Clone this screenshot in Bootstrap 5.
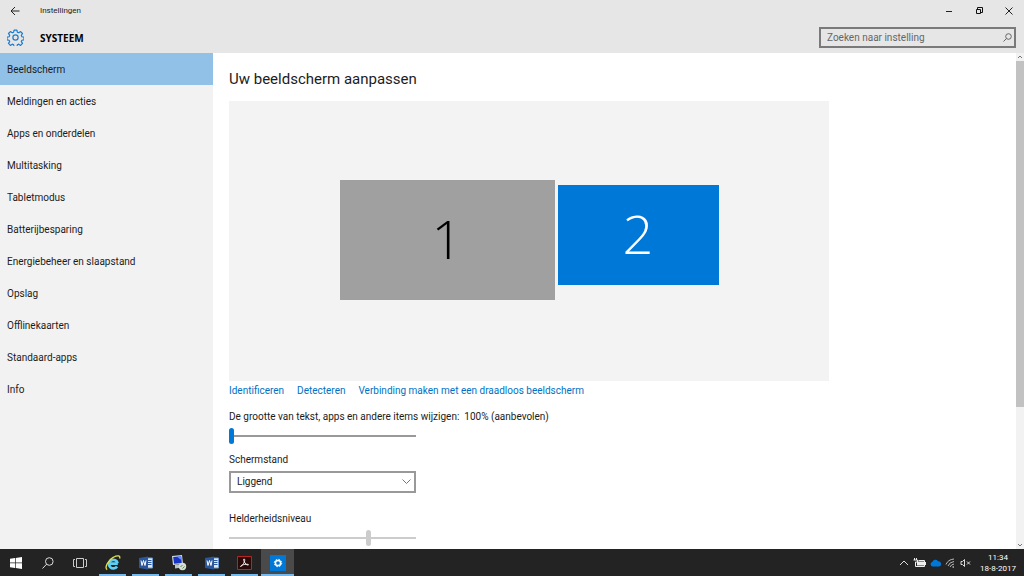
<!DOCTYPE html>
<html lang="nl">
<head>
<meta charset="utf-8">
<meta name="viewport" content="width=device-width, initial-scale=1">
<title>Instellingen</title>
<link rel="stylesheet" href="https://cdn.jsdelivr.net/npm/bootstrap@5.3.0/dist/css/bootstrap.min.css">
<style>
  body { font-family: Roboto, "Open Sans", sans-serif; font-size: 10px; line-height: 16px; color: #1c1c1c; background: #fff; }
  svg { display: block; flex: none; }
  .icon-btn { border: 0; background: none; color: inherit; padding: 0; display: flex; align-items: center; justify-content: center; }
  .app-head { background: #e6e6e6; }
  .title-row { height: 22px; }
  .title-row .icon-btn { width: 30px; height: 22px; }
  .app-title { font-size: 8px; padding-left: 10px; }
  .page-row { height: 31px; padding-right: 8px; padding-left: 7px; }
  .page-title { font-size: 10px; font-family: "Open Sans", sans-serif; font-weight: 700; color: #000; }
  .search-box { width: 197px; height: 21px; border: 2px solid #7a7a7a; padding: 0 2px 0 6px; }
  .search-box input { border: 0; background: none; outline: 0; padding: 0; min-width: 0; color: #222; }
  .search-box input::placeholder { color: #666; opacity: 1; }
  .side { width: 213px; background: #f2f2f2; }
  .side .nav-link { height: 32px; padding: 9px 7px 7px; color: #1c1c1c; border-radius: 0; }
  .side .nav-link.active { background: #91c1e7; }
  .main-pane { padding: 16px 16px 0; min-height: 0; }
  .main-pane h1 { font-size: 15px; line-height: 20px; font-weight: 400; margin: 0 0 12px; }
  .stage { max-width: 600px; height: 280px; background: #f3f3f3; gap: 3px; padding-top: 79px; }
  .screen { font-family: "Open Sans", sans-serif; font-size: 54px; font-weight: 300; border: 0; padding: 0 0 4px; line-height: 60px; }
  .screen-one { width: 215px; height: 120px; background: #a0a0a0; color: #000; }
  .screen-two { width: 161px; height: 100px; background: #0078d7; color: #fff; margin-top: 5px; }
  .actions { gap: 13px; margin: 2px 0 10px; }
  .actions a { color: #0071c5; text-decoration: none; }
  .field { width: 187px; }
  .win-range { appearance: none; display: block; width: 100%; height: 16px; margin: 3px 0 8px; background: linear-gradient(#999, #999) center / 100% 2px no-repeat; }
  .win-range::-webkit-slider-thumb { appearance: none; width: 5px; height: 16px; border-radius: 3px; background: #0078d7; }
  .win-range:disabled { background-image: linear-gradient(#ccc, #ccc); }
  .win-range:disabled::-webkit-slider-thumb { background: #ccc; }
  .win-select { position: relative; margin: 3px 0 18px; }
  .win-select select { appearance: none; display: block; width: 100%; height: 22px; border: 2px solid #999; border-radius: 0; background: #fff; padding: 0 6px; color: #1c1c1c; }
  .win-select svg { position: absolute; right: 5px; top: 8px; pointer-events: none; }
  .scroll-col { width: 8px; background: #f2f2f2; }
  .scroll-thumb { flex: 346 0 0; background: #c2c2c2; }
  .scroll-rest { flex: 134 0 0; }
  .task { height: 27px; background: #232323; color: #fff; }
  .task .icon-btn { width: 32px; height: 27px; }
  .task .running { border-bottom: 2px solid #76b9ed; width: 27px; margin: 0 3px; padding-top: 2px; }
  .task .current { background: #4a4a4a; width: 33px; margin: 0; }
  .tray { gap: 4px; padding-right: 8px; }
  .clock { font-size: 8px; line-height: 11px; margin-left: 4px; }
</style>
</head>
<body class="vh-100 d-flex flex-column overflow-hidden">
<header class="app-head">
  <div class="title-row d-flex align-items-center">
    <button class="icon-btn" aria-label="Terug"><svg width="10" height="10" fill="none" stroke="#222"><path d="M9.500 5H1M5 1 1 5l4 4"/></svg></button>
    <span class="app-title flex-grow-1">Instellingen</span>
    <button class="icon-btn" aria-label="Minimaliseren"><svg width="8" height="8" stroke="#222"><path d="M1 4.500h6"/></svg></button>
    <button class="icon-btn" aria-label="Herstellen"><svg width="8" height="8" fill="none" stroke="#111"><path d="M1.500 2.500h4v4h-4zM2.500 2V.500h5v5H6"/></svg></button>
    <button class="icon-btn" aria-label="Sluiten"><svg width="8" height="8" stroke="#222"><path d="m.500.500 7 7m0-7-7 7"/></svg></button>
  </div>
  <div class="page-row d-flex align-items-center">
    <svg width="17" height="17" viewBox="0 0 24 24" fill="none" stroke="#1c7cd0" stroke-width="1.700"><circle cx="12" cy="12" r="3.700"/><path d="M10 1.500h4l.6 3 2 .9 2.600-1.800 2.700 2.800-1.700 2.600.8 1.900 3 .6v3.800l-3 .6-.8 2 1.700 2.500-2.700 2.800-2.600-1.800-2 .9-.6 3h-4l-.6-3-2-.9-2.600 1.800-2.700-2.800 1.700-2.500-.8-2-3-.6v-3.800l3-.6.8-1.900-1.700-2.600 2.700-2.800 2.600 1.800 2-.9z" stroke-linejoin="round"/></svg>
    <span class="page-title ms-3 flex-grow-1">SYSTEEM</span>
    <div class="search-box d-flex align-items-center">
      <input class="flex-grow-1" type="search" placeholder="Zoeken naar instelling" aria-label="Zoeken naar instelling">
      <svg width="9" height="9" fill="none" stroke="#666"><circle cx="5.500" cy="3.500" r="2.800"/><path d="M3.500 5.500.500 8.500"/></svg>
    </div>
  </div>
</header>
<div class="d-flex flex-grow-1 overflow-hidden">
  <nav class="side nav flex-column flex-nowrap flex-shrink-0">
    <a class="nav-link active" href="#">Beeldscherm</a>
    <a class="nav-link" href="#">Meldingen en acties</a>
    <a class="nav-link" href="#">Apps en onderdelen</a>
    <a class="nav-link" href="#">Multitasking</a>
    <a class="nav-link" href="#">Tabletmodus</a>
    <a class="nav-link" href="#">Batterijbesparing</a>
    <a class="nav-link" href="#">Energiebeheer en slaapstand</a>
    <a class="nav-link" href="#">Opslag</a>
    <a class="nav-link" href="#">Offlinekaarten</a>
    <a class="nav-link" href="#">Standaard-apps</a>
    <a class="nav-link" href="#">Info</a>
  </nav>
  <main class="main-pane flex-grow-1 overflow-hidden">
    <h1>Uw beeldscherm aanpassen</h1>
    <div class="stage d-flex justify-content-center align-items-start">
      <button class="screen screen-one">1</button>
      <button class="screen screen-two">2</button>
    </div>
    <div class="actions d-flex">
      <a href="#">Identificeren</a>
      <a href="#">Detecteren</a>
      <a href="#">Verbinding maken met een draadloos beeldscherm</a>
    </div>
    <label class="d-block" for="scale">De grootte van tekst, apps en andere items wijzigen:&nbsp; 100% (aanbevolen)</label>
    <div class="field">
      <input class="win-range" id="scale" type="range" min="0" max="3" value="0">
      <label class="d-block" for="orient">Schermstand</label>
      <div class="win-select">
        <select id="orient"><option>Liggend</option><option>Staand</option></select>
        <svg width="9" height="6" fill="none" stroke="#777"><path d="m.500.500 4 4 4-4"/></svg>
      </div>
      <label class="d-block" for="bright">Helderheidsniveau</label>
      <input class="win-range" id="bright" type="range" min="0" max="100" value="75" disabled>
    </div>
  </main>
  <div class="scroll-col d-flex flex-column flex-shrink-0" aria-hidden="true">
    <svg width="8" height="8" fill="none" stroke="#777"><path d="m2 5 2-2 2 2"/></svg>
    <div class="scroll-thumb"></div>
    <div class="scroll-rest"></div>
    <svg width="8" height="8" fill="none" stroke="#777"><path d="m2 3 2 2 2-2"/></svg>
  </div>
</div>
<footer class="task d-flex align-items-center flex-shrink-0">
  <button class="icon-btn" aria-label="Start"><svg width="12" height="12" fill="#fff"><path d="M0 1.800 5 1v4.600H0zM5.700.900 12 0v5.600H5.700zM0 6.300h5v4.600l-5-.7zM5.700 6.300H12V12l-6.300-.9z"/></svg></button>
  <button class="icon-btn" aria-label="Zoeken"><svg width="12" height="12" fill="none" stroke="#ddd"><circle cx="7.300" cy="4.500" r="3.800"/><path d="M4.600 7.200.500 11.500"/></svg></button>
  <button class="icon-btn" aria-label="Taakweergave"><svg width="14" height="10" fill="none" stroke="#ccc"><path d="M3.500.500h7v9h-7zM2 1.500H.500v7H2M12 1.500h1.500v7H12"/></svg></button>
  <button class="icon-btn running" aria-label="Internet Explorer"><svg width="16" height="16" viewBox="0 0 16 16" fill="none"><path d="M12.800 8.600H4.500M12.600 8.300A4.300 4.300 0 1 0 12 11.500" stroke="#5fd0f5" stroke-width="2.700"/><path d="M2.200 14.600C-.8 13 3 5 8.500 2.200 12 .300 15.700.200 14.600 3.500" stroke="#e6e04a" stroke-width="1.300"/></svg></button>
  <button class="icon-btn running" aria-label="Word"><svg width="14" height="14"><path d="M8 2h5.500v10H8z" fill="#dce8f8" stroke="#6d99d6"/><path d="M9 4.500h3.500m-3.500 2h3.500m-3.500 2h3.500" stroke="#2b579a"/><path d="M0 2 9 .5v13L0 12z" fill="#2b579a"/><path d="m2 4.500 1 5 1.500-5 1.500 5 1-5" fill="none" stroke="#fff"/></svg></button>
  <button class="icon-btn running" aria-label="Extern bureaublad"><svg width="16" height="16"><path d="m1 1 10-1 1 9-10 1z" fill="#d8dde6"/><path d="m2.200 2 8-.8.6 6.800-7.800.7z" fill="#1735c4"/><path d="m6 1.700 4.200-.4.500 4z" fill="#6d90ff"/><path d="m4 10 5-.5 2 3-7 1z" fill="#bcc3cc"/><circle cx="11.500" cy="11.500" r="3.700" fill="#d9ddd9"/><path d="m9.500 12 2-2m0 3.500 2-2" stroke="#4d9344"/></svg></button>
  <button class="icon-btn running" aria-label="Word"><svg width="14" height="14"><path d="M8 2h5.500v10H8z" fill="#dce8f8" stroke="#6d99d6"/><path d="M9 4.500h3.500m-3.500 2h3.500m-3.500 2h3.500" stroke="#2b579a"/><path d="M0 2 9 .5v13L0 12z" fill="#2b579a"/><path d="m2 4.500 1 5 1.500-5 1.500 5 1-5" fill="none" stroke="#fff"/></svg></button>
  <button class="icon-btn running" aria-label="Acrobat Reader"><svg width="15" height="14"><path d="M.500.500h14v13H.500z" fill="#2a0a08" stroke="#b5261e"/><path d="M7 3c1.500 0 .500 3-.500 4.500S4 11 3.500 10.500 6 8 11 8.300c1.500.5-.5 1.500-2.200-.3S6 3 7 3z" fill="none" stroke="#fff" stroke-width=".9"/></svg></button>
  <button class="icon-btn running current" aria-label="Instellingen"><svg width="16" height="16"><path d="M0 0h16v16H0z" fill="#0078d7"/><circle cx="8" cy="8" r="2.600" fill="none" stroke="#fff" stroke-width="1.500"/><circle cx="8" cy="8" r="3.700" fill="none" stroke="#fff" stroke-dasharray="1.600 1.306"/></svg></button>
  <div class="tray d-flex align-items-center ms-auto">
    <svg width="10" height="8" fill="none" stroke="#ddd"><path d="m1 6 4-4 4 4"/></svg>
    <svg width="13" height="10"><path d="M4 3.500h7v4H4z" fill="#eee"/><path d="M1.500 0v2M3.500 0v2M.500 2h4v2h-2v4.500h9V2.500h-6M12.500 4v3" stroke="#eee" fill="none"/></svg>
    <svg width="11" height="8"><path d="M2.500 7.500A2.300 2.300 0 0 1 2.300 3 3.200 3.200 0 0 1 8 2.200 2.700 2.700 0 0 1 9 7.500z" fill="#0078d7"/></svg>
    <svg width="11" height="10" fill="none" stroke="#bbb"><path d="M1 6.500Q3 1.500 9 1M3 8Q4.500 4 9 3.500M5 9q1-2.500 4-3"/><path d="M7.500 9h1.500" stroke="#fff"/></svg>
    <svg width="12" height="10" fill="none" stroke="#ddd"><path d="M1 3.500h1.500l2-2v7l-2-2H1zM7 3.500l3 3m0-3-3 3"/></svg>
    <div class="clock text-center">11:34<br>18-8-2017</div>
  </div>
</footer>
<script src="https://cdn.jsdelivr.net/npm/bootstrap@5.3.0/dist/js/bootstrap.bundle.min.js"></script>
</body>
</html>
